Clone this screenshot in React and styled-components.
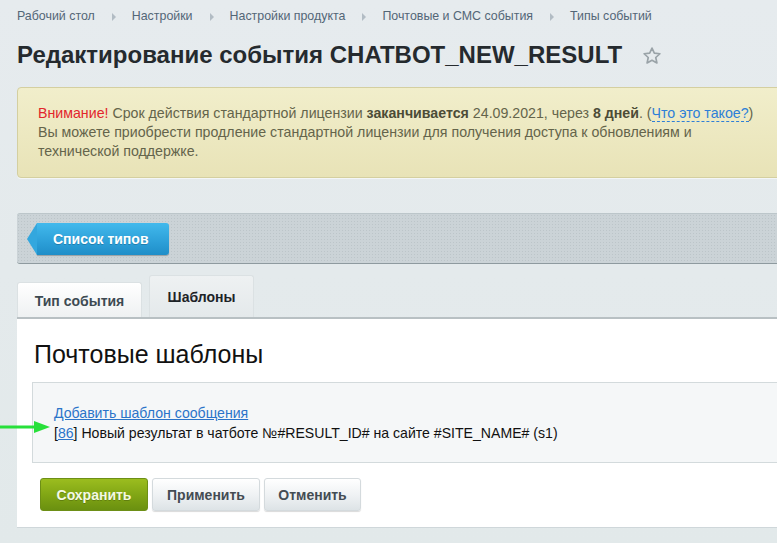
import React from 'react'
import styled, { createGlobalStyle } from 'styled-components'

const Global = createGlobalStyle`
  html, body {
    margin: 0;
    padding: 0;
  }
  body {
    font-family: "Liberation Sans", Arial, sans-serif;
    background: linear-gradient(180deg, #e6ebee 0%, #e2e9ea 100%);
    overflow: hidden;
  }
`

const Page = styled.div`
  width: 777px;
  height: 543px;
  overflow: hidden;
  position: relative;
  padding-left: 17px;
  box-sizing: border-box;
`

const Column = styled.div`
  margin-right: -20px;
`

const Crumbs = styled.div`
  display: flex;
  align-items: center;
  padding-top: 8px;
  height: 16px;
  font-size: 12.4px;
  line-height: 16px;
  color: #536677;
`

const Crumb = styled.span`
  white-space: nowrap;
`

const Sep = styled.span`
  width: 0;
  height: 0;
  border-top: 4px solid transparent;
  border-bottom: 4px solid transparent;
  border-left: 4px solid #b2bcc4;
  margin: 1px 16px 0 17px;
`

const TitleRow = styled.div`
  display: flex;
  align-items: center;
  margin-top: 17px;
  height: 28px;
`

const Title = styled.h1`
  margin: 0;
  font-size: 24px;
  line-height: 28px;
  font-weight: bold;
  color: #252a2e;
  white-space: nowrap;
`

const Star = styled.svg`
  margin-left: 20px;
  margin-top: 1px;
`

const Notice = styled.div`
  margin-top: 18px;
  height: 91px;
  box-sizing: border-box;
  padding: 16px 20px 0 20px;
  border: 1px solid #d4cfa0;
  border-radius: 4px;
  background: linear-gradient(180deg, #f1eecb 0%, #e8e3b7 100%);
  box-shadow: 0 1px 0 #f3f6f7;
  font-size: 14.2px;
  line-height: 19px;
  color: #64644b;
  white-space: nowrap;
`

const Warn = styled.span`
  color: #e2262c;
`

const Strong = styled.b`
  color: #4c4c37;
`

const DashLink = styled.a`
  color: #2d7fd8;
  text-decoration: none;
  border-bottom: 1px dashed #2d7fd8;
`

const Toolbar = styled.div`
  margin-top: 35px;
  height: 51px;
  box-sizing: border-box;
  padding: 9px 0 0 10px;
  border-top: 1px solid #bcc6ca;
  border-bottom: 1px solid #8e9a9f;
  border-radius: 3px 0 0 3px;
  background-color: #cbd3d7;
  background-image: radial-gradient(#bcc5c9 0.6px, transparent 0.8px);
  background-size: 3px 3px;
`

const BackButton = styled.div`
  position: relative;
  display: inline-flex;
  align-items: center;
  height: 32px;
  margin-left: 10px;
  padding: 0 21px 0 16px;
  border-radius: 0 3px 3px 0;
  background: linear-gradient(180deg, #42b9ec 0%, #2c9fd8 60%, #1f8ec8 100%);
  box-shadow: 0 1px 1px rgba(0, 0, 0, 0.25);
  color: #fff;
  font-weight: bold;
  font-size: 14px;
  text-shadow: 0 1px 0 rgba(0, 0, 0, 0.2);

  &::before {
    content: '';
    position: absolute;
    left: -10px;
    top: 0;
    width: 0;
    height: 0;
    border-top: 16px solid transparent;
    border-bottom: 16px solid transparent;
    border-right: 10px solid #33a7de;
  }
`

const Tabs = styled.div`
  display: flex;
  align-items: flex-end;
  margin-top: 11px;
  height: 42px;
  gap: 7px;
`

const Tab = styled.div`
  display: flex;
  align-items: center;
  justify-content: center;
  box-sizing: border-box;
  width: ${p => p.$w}px;
  height: ${p => (p.$active ? '42px' : '35px')};
  padding-top: ${p => (p.$active ? '0' : '2px')};
  border: 1px solid #dbe1e3;
  border-bottom: none;
  border-radius: 3px 3px 0 0;
  background: ${p =>
    p.$active
      ? 'linear-gradient(180deg, #eef1f2 0%, #e4e9eb 100%)'
      : 'linear-gradient(180deg, #ffffff 0%, #eef1f2 100%)'};
  color: ${p => (p.$active ? '#1d2327' : '#3d4a52')};
  font-weight: bold;
  font-size: 14px;
`

const Content = styled.div`
  height: 211px;
  box-sizing: border-box;
  border-top: 2px solid #b8c0c3;
  border-bottom: 1px solid #cfd7da;
  background: #fff;
  padding: 20px 0 0 15px;
`

const Heading = styled.h2`
  margin: 0;
  font-size: 25px;
  line-height: 30px;
  font-weight: normal;
  color: #111;
  padding-left: 2px;
`

const Box = styled.div`
  position: relative;
  margin-top: 13px;
  height: 81px;
  box-sizing: border-box;
  padding: 20px 0 0 21px;
  border: 1px solid #d3dadc;
  border-right: none;
  background: #f5f7f8;
  font-size: 14.1px;
  line-height: 20px;
  color: #111;
`

const Link = styled.a`
  color: #2b74c9;
  text-decoration: underline;
`

const Arrow = styled.svg`
  position: absolute;
  left: -33px;
  top: 37px;
`

const Buttons = styled.div`
  display: flex;
  gap: 4px;
  margin-top: 15px;
  padding-left: 8px;
`

const Button = styled.div`
  display: flex;
  align-items: center;
  justify-content: center;
  box-sizing: border-box;
  height: 33px;
  width: ${p => p.$w}px;
  border-radius: 3px;
  font-weight: bold;
  font-size: 14px;
  ${p =>
    p.$primary
      ? `
    background: linear-gradient(180deg, #9bbd1f 0%, #7fa414 55%, #6a9010 100%);
    color: #f4f9e4;
    border: 1px solid #6d8f16;
    text-shadow: 0 1px 0 rgba(0, 0, 0, 0.2);
  `
      : `
    background: linear-gradient(180deg, #ffffff 0%, #eef1f3 55%, #dde3e6 100%);
    color: #444c53;
    border: 1px solid #d4dadd;
    box-shadow: 0 1px 1px rgba(0, 0, 0, 0.15);
  `}
`

const crumbs = [
  'Рабочий стол',
  'Настройки',
  'Настройки продукта',
  'Почтовые и СМС события',
  'Типы событий'
]

export default function App() {
  return (
    <Page>
      <Global />
      <Column>
        <Crumbs>
          {crumbs.map((c, i) => (
            <React.Fragment key={c}>
              {i > 0 && <Sep />}
              <Crumb>{c}</Crumb>
            </React.Fragment>
          ))}
        </Crumbs>
        <TitleRow>
          <Title>Редактирование события CHATBOT_NEW_RESULT</Title>
          <Star width="20" height="20" viewBox="0 0 24 24">
            <path
              d="M12 2.5l2.8 6.1 6.7.7-5 4.5 1.4 6.6L12 17.1l-5.9 3.3 1.4-6.6-5-4.5 6.7-.7z"
              fill="none"
              stroke="#9aa3a8"
              strokeWidth="2"
              strokeLinejoin="round"
            />
          </Star>
        </TitleRow>
        <Notice>
          <Warn>Внимание!</Warn> Срок действия стандартной лицензии{' '}
          <Strong>заканчивается</Strong> 24.09.2021, через <Strong>8 дней</Strong>. (
          <DashLink>Что это такое?</DashLink>)
          <br />
          Вы можете приобрести продление стандартной лицензии для получения доступа к
          обновлениям и
          <br />
          технической поддержке.
        </Notice>
        <Toolbar>
          <BackButton>Список типов</BackButton>
        </Toolbar>
        <Tabs>
          <Tab $w={125}>Тип события</Tab>
          <Tab $active $w={105}>Шаблоны</Tab>
        </Tabs>
        <Content>
          <Heading>Почтовые шаблоны</Heading>
          <Box>
            <Arrow width="52" height="14" viewBox="0 0 52 14">
              <line x1="0" y1="7" x2="38" y2="7" stroke="#27e03a" strokeWidth="3" />
              <polygon points="34,1 50,7 34,13" fill="#27e03a" />
            </Arrow>
            <Link>Добавить шаблон сообщения</Link>
            <br />
            [<Link>86</Link>] Новый результат в чатботе №#RESULT_ID# на сайте #SITE_NAME# (s1)
          </Box>
          <Buttons>
            <Button $primary $w={108}>Сохранить</Button>
            <Button $w={108}>Применить</Button>
            <Button $w={97}>Отменить</Button>
          </Buttons>
        </Content>
      </Column>
    </Page>
  )
}
